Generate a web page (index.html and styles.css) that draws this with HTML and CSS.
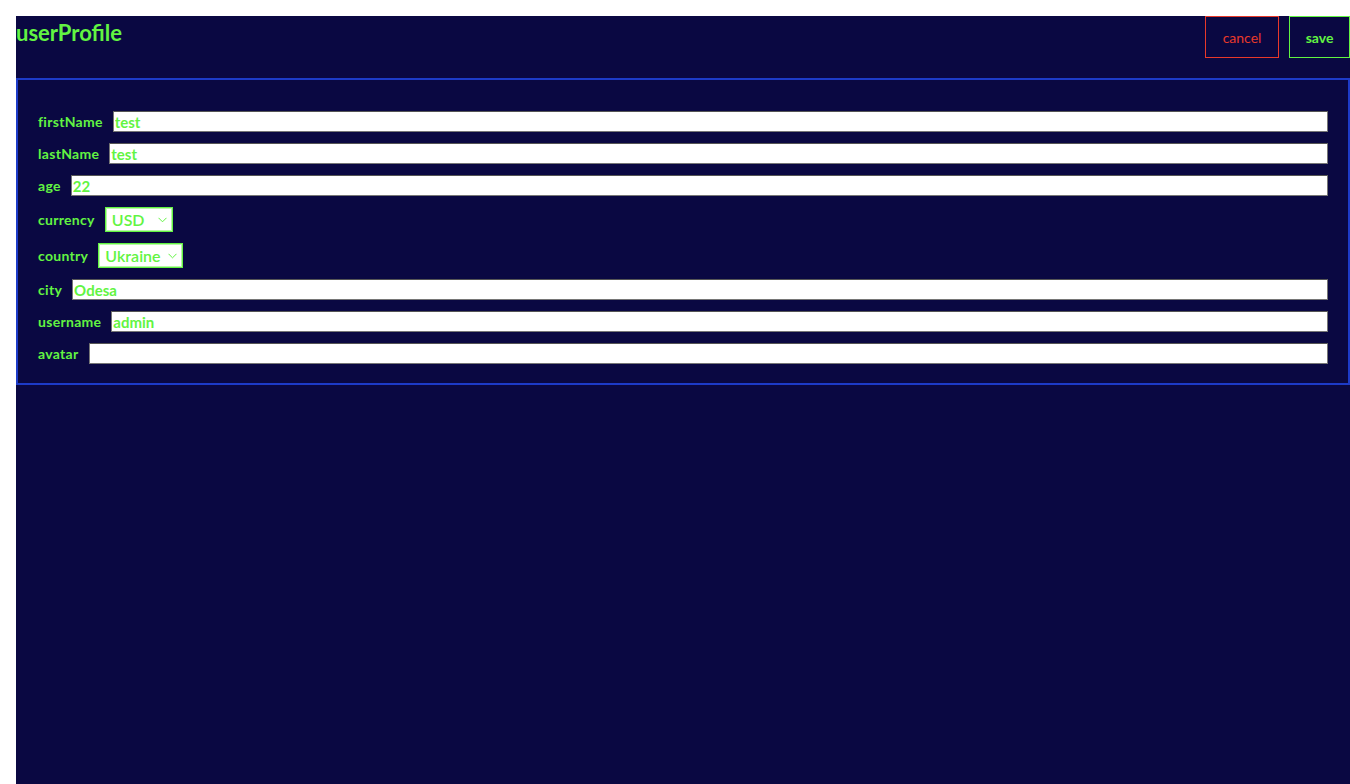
FILE: index.html
```html
<!DOCTYPE html>
<html lang="en">
<head>
  <meta charset="UTF-8">
  <meta name="viewport" content="width=device-width, initial-scale=1.0">
  <title>userProfile</title>
  <link rel="stylesheet" href="styles.css">
</head>
<body>
  <div class="page">
    <div class="header">
      <h1 class="title">userProfile</h1>
      <div class="actions">
        <button class="btn btn-cancel">cancel</button>
        <button class="btn btn-save">save</button>
      </div>
    </div>

    <div class="card">
      <div class="row">
        <label for="firstName">firstName</label>
        <input type="text" id="firstName" class="field" value="test">
      </div>
      <div class="row">
        <label for="lastName">lastName</label>
        <input type="text" id="lastName" class="field" value="test">
      </div>
      <div class="row">
        <label for="age">age</label>
        <input type="text" id="age" class="field" value="22">
      </div>
      <div class="row row-select">
        <label for="currency">currency</label>
        <span class="select-wrap select-currency">
          <select id="currency" class="select">
            <option>USD</option>
            <option>EUR</option>
          </select>
          <svg class="chevron" width="9" height="6" viewBox="0 0 9 6"><path d="M0.5 0.8 L4.5 4.8 L8.5 0.8" fill="none" stroke="#62f442" stroke-width="1"/></svg>
        </span>
      </div>
      <div class="row row-select">
        <label for="country">country</label>
        <span class="select-wrap select-country">
          <select id="country" class="select">
            <option>Ukraine</option>
            <option>Poland</option>
          </select>
          <svg class="chevron" width="9" height="6" viewBox="0 0 9 6"><path d="M0.5 0.8 L4.5 4.8 L8.5 0.8" fill="none" stroke="#62f442" stroke-width="1"/></svg>
        </span>
      </div>
      <div class="row">
        <label for="city">city</label>
        <input type="text" id="city" class="field" value="Odesa">
      </div>
      <div class="row">
        <label for="username">username</label>
        <input type="text" id="username" class="field" value="admin">
      </div>
      <div class="row">
        <label for="avatar">avatar</label>
        <input type="text" id="avatar" class="field" value="">
      </div>
    </div>
  </div>
</body>
</html>
```

FILE: styles.css
```css
body {
  margin: 16px 0 0 16px;
  background-color: #ffffff;
  font-family: 'Lato', 'Open Sans', sans-serif;
  overflow: hidden;
}

.page {
  background-color: #0a0842;
  min-height: calc(100vh - 16px);
  color: #62f442;
}

.header {
  display: flex;
  justify-content: space-between;
  align-items: flex-start;
  height: 62px;
}

.title {
  margin: 0;
  padding-top: 3px;
  font-size: 22px;
  font-weight: 700;
  letter-spacing: 0;
  line-height: 28px;
  color: #62f442;
}

.actions {
  display: flex;
  gap: 10px;
}

.btn {
  height: 42px;
  background: transparent;
  font-family: 'Lato', 'Open Sans', sans-serif;
  font-size: 14px;
  cursor: pointer;
}

.btn-cancel {
  width: 74px;
  border: 1px solid #e8392a;
  color: #e8392a;
}

.btn-save {
  width: 61px;
  border: 1px solid #62f442;
  color: #62f442;
  font-weight: 700;
}

.card {
  border: 2px solid #1d3bc8;
  padding: 31px 20px 19px 20px;
  display: flex;
  flex-direction: column;
  gap: 11px;
}

.row {
  display: flex;
  align-items: center;
  height: 21px;
}

.row-select {
  height: 25px;
}

.row label {
  font-size: 14px;
  font-weight: 700;
  letter-spacing: 0.3px;
  margin-right: 10px;
  color: #62f442;
}

.field {
  flex: 1;
  height: 21px;
  box-sizing: border-box;
  border: 1px solid #767676;
  border-top-color: #555555;
  background: #ffffff;
  padding: 0 1px;
  font-family: 'Lato', 'Open Sans', sans-serif;
  font-size: 15px;
  font-weight: 700;
  color: #62f442;
  outline: none;
}

.select-wrap {
  position: relative;
  display: inline-block;
}

.select {
  appearance: none;
  -webkit-appearance: none;
  height: 25px;
  box-sizing: border-box;
  border: 1px solid #62f442;
  box-shadow: inset 0 0 0 1px #b8f7a8;
  background: #ffffff;
  padding: 0 0 0 6px;
  font-family: 'Lato', 'Open Sans', sans-serif;
  font-size: 16px;
  font-weight: 600;
  color: #62f442;
  border-radius: 0;
}

.select-currency .select {
  width: 68px;
}

.select-country .select {
  width: 85px;
}

.chevron {
  position: absolute;
  right: 6px;
  top: 10px;
  pointer-events: none;
}
```
